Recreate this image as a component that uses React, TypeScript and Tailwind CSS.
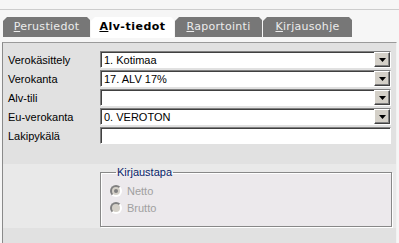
import React from "react";

const tabs = [
  { key: "P", rest: "erustiedot", w: "w-[87px]" },
  { key: "A", rest: "lv-tiedot", w: "w-[83px]", active: true },
  { key: "R", rest: "aportointi", w: "w-[87px]" },
  { key: "K", rest: "irjausohje", w: "w-[89px]" },
];

const rows = [
  { label: "Verokäsittely", value: "1. Kotimaa", select: true },
  { label: "Verokanta", value: "17. ALV 17%", select: true },
  { label: "Alv-tili", value: "", select: true },
  { label: "Eu-verokanta", value: "0. VEROTON", select: true },
  { label: "Lakipykälä", value: "", select: false },
];

function DropButton() {
  return (
    <div className="flex h-[15px] w-[16px] items-center justify-center border border-t-white border-l-white border-r-[#404040] border-b-[#404040] bg-[#d4d0c8] shadow-[inset_-1px_-1px_0_#808080]">
      <svg width="7" height="4" viewBox="0 0 7 4">
        <path d="M0 0h7L3.5 4z" fill="#000" />
      </svg>
    </div>
  );
}

function Field({ value, select }: { value: string; select: boolean }) {
  return (
    <div className="flex h-[17px] w-[291px] items-center border border-t-[#808080] border-l-[#808080] border-r-white border-b-white bg-white shadow-[inset_1px_1px_0_#404040]">
      <div className="flex-1 truncate pl-[3px] pt-[1px] text-[11px] leading-none text-black">
        {value}
      </div>
      {select && <DropButton />}
    </div>
  );
}

function Radio({ label, checked }: { label: string; checked?: boolean }) {
  return (
    <div className="flex h-[17px] items-center gap-[5px]">
      <div className="flex h-[12px] w-[12px] items-center justify-center rounded-full border-2 border-t-[#808080] border-l-[#808080] border-r-white border-b-white bg-[#d4d0c8]">
        {checked && <div className="h-[4px] w-[4px] rounded-full bg-[#808080]" />}
      </div>
      <span className="text-[11px] leading-[14px] text-[#a0a0a0]">{label}</span>
    </div>
  );
}

export default function App() {
  return (
    <div className="flex h-[243px] w-[399px] flex-col overflow-hidden bg-[#f6f6f6] font-['Liberation_Sans',Arial,sans-serif]">
      <div className="h-[10px] shrink-0 border-b border-[#cdcdcd]" />
      <div className="flex h-[21px] shrink-0 items-start gap-[1px] pl-[3px] mt-[7px]">
        {tabs.map((t) =>
          t.active ? (
            <div
              key={t.key}
              className={`${t.w} flex h-[21px] items-center justify-center bg-white font-['DejaVu_Sans',sans-serif] text-[11px] font-bold tracking-[0.5px] text-black [clip-path:polygon(4px_0,calc(100%-3px)_0,100%_3px,100%_100%,0_100%,0_4px)]`}
            >
              <span>
                <span className="underline">{t.key}</span>
                {t.rest}
              </span>
            </div>
          ) : (
            <div
              key={t.key}
              className={`${t.w} flex h-[20px] items-center justify-center bg-[#777777] font-['DejaVu_Sans',sans-serif] text-[11px] tracking-[0.3px] text-[#ececec] [clip-path:polygon(4px_0,calc(100%-3px)_0,100%_3px,100%_100%,0_100%,0_4px)]`}
            >
              <span>
                <span className="underline">{t.key}</span>
                {t.rest}
              </span>
            </div>
          )
        )}
      </div>
      <div className="mt-[4px] ml-[2px] flex w-[395px] flex-1 flex-col border-t border-l border-r border-t-[#9a9a9a] border-l-[#8a8a8a] border-r-[#f2f2f2] bg-[#e1e1e1]">
        <div className="flex flex-col gap-[2px] pt-[8px]">
          {rows.map((r) => (
            <div key={r.label} className="flex h-[17px] items-center">
              <div className="w-[97px] pl-[5px] pt-[2px] text-[11px] leading-[15px] text-black">{r.label}</div>
              <Field value={r.value} select={r.select} />
            </div>
          ))}
        </div>
        <div className="mt-[20px] flex flex-1 flex-col bg-[#e9e9e9] pt-[2px] pl-[97px] pr-[4px]">
          <fieldset className="h-[61px] border border-[#888888] bg-[#ece9ec] pl-[9px] shadow-[inset_1px_1px_0_white,1px_1px_0_white]">
            <legend className="px-[1px] ml-[6px] text-[11px] leading-[12px] text-[#0a246a]">Kirjaustapa</legend>
            <div className="flex flex-col pt-[4px]">
              <Radio label="Netto" checked />
              <Radio label="Brutto" />
            </div>
          </fieldset>
          <div className="flex-1 bg-[#e1e1e1] -ml-[97px] -mr-[4px] mt-[1px]" />
        </div>
      </div>
    </div>
  );
}
